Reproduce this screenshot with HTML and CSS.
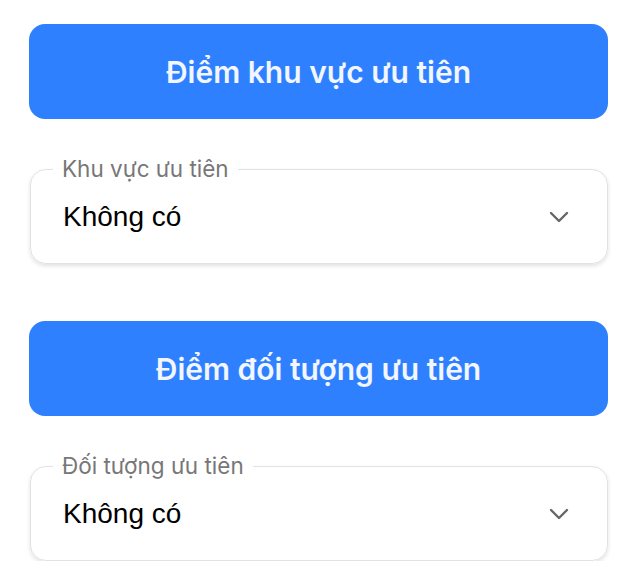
FILE: index.html
```html
<!DOCTYPE html>
<html lang="vi">
<head>
    <meta charset="UTF-8">
    <meta name="viewport" content="width=device-width, initial-scale=1.0">
    <title>Điểm ưu tiên</title>
    <link rel="stylesheet" href="styles.css">
</head>
<body>
    <div class="container">
        <section class="group">
            <div class="group-title">Điểm khu vực ưu tiên</div>
            <fieldset class="select-box">
                <legend>Khu vực ưu tiên</legend>
                <div class="select-row">
                    <span class="select-value">Không có</span>
                    <svg class="chevron" width="20" height="12" viewBox="0 0 20 12">
                        <path d="M2 2 L10 10 L18 2" fill="none" stroke="#666" stroke-width="2.4" stroke-linecap="round" stroke-linejoin="round"/>
                    </svg>
                </div>
            </fieldset>
        </section>

        <section class="group">
            <div class="group-title">Điểm đối tượng ưu tiên</div>
            <fieldset class="select-box">
                <legend>Đối tượng ưu tiên</legend>
                <div class="select-row">
                    <span class="select-value">Không có</span>
                    <svg class="chevron" width="20" height="12" viewBox="0 0 20 12">
                        <path d="M2 2 L10 10 L18 2" fill="none" stroke="#666" stroke-width="2.4" stroke-linecap="round" stroke-linejoin="round"/>
                    </svg>
                </div>
            </fieldset>
        </section>
    </div>
</body>
</html>
```

FILE: styles.css
```css
body {
    margin: 0;
    padding: 0;
    background-color: #ffffff;
    font-family: 'Liberation Sans', Arial, sans-serif;
}

.container {
    padding: 24px 30px 0 29px;
    display: flex;
    flex-direction: column;
    gap: 57px;
}

.group {
    display: flex;
    flex-direction: column;
    gap: 39px;
}

.group-title {
    height: 95px;
    border-radius: 16px;
    background-color: #2f80ff;
    color: #f2f6ff;
    font-family: Inter, sans-serif;
    font-weight: 600;
    font-size: 30px;
    display: flex;
    justify-content: center;
    align-items: center;
}

.select-box {
    margin: 0 0 0 1px;
    padding: 0 38px 0 22px;
    border: 1.5px solid #e2e2e2;
    border-radius: 16px;
    box-shadow: 0 2px 4px rgba(0, 0, 0, 0.12);
}

.select-box legend {
    padding: 0 9px;
    font-family: Inter, sans-serif;
    font-size: 22.5px;
    color: #777777;
    line-height: 22px;
}

.select-row {
    display: flex;
    justify-content: space-between;
    align-items: center;
    height: 73px;
    padding: 0 0 10px 10px;
}

.select-value {
    font-size: 28px;
    color: #000000;
}

.chevron {
    display: block;
}
```
